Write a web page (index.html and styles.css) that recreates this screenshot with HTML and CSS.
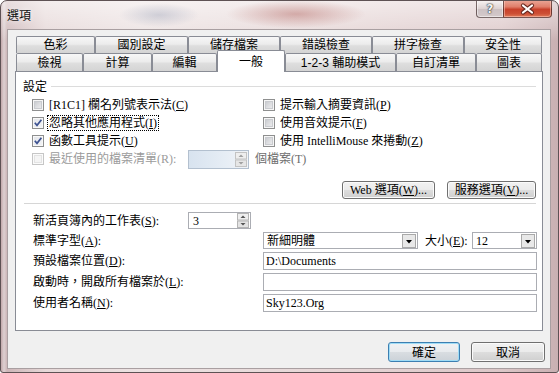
FILE: index.html
```html
<!DOCTYPE html>
<html lang="zh-Hant">
<head>
<meta charset="utf-8">
<title>選項</title>
<link rel="stylesheet" href="styles.css">
</head>
<body>
<div class="window">
  <div class="titlebar">
    <div class="title">選項</div>
    <div class="caption">
      <div class="cap-btn cap-help"><span class="qmark">?</span></div>
      <div class="cap-btn cap-close">
        <svg width="47" height="16" viewBox="0 0 47 16">
          <path d="M19 4.5 L28 11.5 M28 4.5 L19 11.5" stroke="#6a2b22" stroke-width="4.2" stroke-linecap="round" fill="none"/>
          <path d="M19 4.5 L28 11.5 M28 4.5 L19 11.5" stroke="#ffffff" stroke-width="2.2" stroke-linecap="round" fill="none"/>
        </svg>
      </div>
    </div>
  </div>
  <div class="client">
    <div class="tabstrip">
      <div class="tabrow back">
        <div class="tab w79">色彩</div>
        <div class="tab w93">國別設定</div>
        <div class="tab w92">儲存檔案</div>
        <div class="tab w92">錯誤檢查</div>
        <div class="tab w92">拼字檢查</div>
        <div class="tab w78">安全性</div>
      </div>
      <div class="tabrow front">
        <div class="tab w67">檢視</div>
        <div class="tab w69">計算</div>
        <div class="tab w65">編輯</div>
        <div class="tab active w68">一般</div>
        <div class="tab w111">1-2-3 輔助模式</div>
        <div class="tab w80">自訂清單</div>
        <div class="tab w66">圖表</div>
      </div>
    </div>
    <div class="panel">
      <div class="group-head"><span class="gh-text">設定</span><span class="gh-line"></span></div>
      <div class="opts">
        <div class="chk"><span class="box"></span><span class="lbl">[R1C1] 欄名列號表示法(<u>C</u>)</span></div>
        <div class="chk"><span class="box"></span><span class="lbl">提示輸入摘要資訊(<u>P</u>)</span></div>
        <div class="chk"><span class="box on"><svg width="10" height="10" viewBox="0 0 10 10"><path d="M1.8 4.8 L4 7.4 L8.4 1.8" stroke="#3d5291" stroke-width="1.7" fill="none"/></svg></span><span class="lbl focus">忽略其他應用程式(<u>I</u>)</span></div>
        <div class="chk"><span class="box"></span><span class="lbl">使用音效提示(<u>F</u>)</span></div>
        <div class="chk"><span class="box on"><svg width="10" height="10" viewBox="0 0 10 10"><path d="M1.8 4.8 L4 7.4 L8.4 1.8" stroke="#3d5291" stroke-width="1.7" fill="none"/></svg></span><span class="lbl">函數工具提示(<u>U</u>)</span></div>
        <div class="chk"><span class="box"></span><span class="lbl">使用 IntelliMouse 來捲動(<u>Z</u>)</span></div>
        <div class="chk wide">
          <span class="box dis"></span>
          <span class="lbl recent">最近使用的檔案清單(R):</span>
          <span class="spin disabled">
            <span class="spin-field"></span>
            <span class="spin-btns"><svg width="12" height="15" viewBox="0 0 12 15"><rect x="0.5" y="0.5" width="11" height="6.5" fill="#eeeeee" stroke="#c3c3c3"/><rect x="0.5" y="8" width="11" height="6.5" fill="#e6e6e6" stroke="#c3c3c3"/><path d="M3.5 5 L8.5 5 L6 2.5 Z" fill="#a0a0a0"/><path d="M3.5 10 L8.5 10 L6 12.5 Z" fill="#a0a0a0"/></svg></span>
          </span>
          <span class="lbl after">個檔案(T)</span>
        </div>
      </div>
      <div class="web-buttons">
        <div class="btn wb1">Web 選項(<u>W</u>)...</div>
        <div class="btn wb2">服務選項(<u>V</u>)...</div>
      </div>
      <div class="sep"></div>
      <div class="fields">
        <div class="frow r1"><span class="flabel short">新活頁簿內的工作表(<u>S</u>):</span>
          <span class="spin">
            <span class="spin-field">3</span>
            <span class="spin-btns"><svg width="12" height="15" viewBox="0 0 12 15"><rect x="0.5" y="0.5" width="11" height="6.5" fill="#efefef" stroke="#b4b4b4"/><rect x="0.5" y="8" width="11" height="6.5" fill="#e3e3e3" stroke="#b4b4b4"/><path d="M3.5 5 L8.5 5 L6 2.5 Z" fill="#555"/><path d="M3.5 10 L8.5 10 L6 12.5 Z" fill="#555"/></svg></span>
          </span>
        </div>
        <div class="frow r2"><span class="flabel">標準字型(<u>A</u>):</span>
          <span class="combo font"><span class="combo-val">新細明體</span><span class="dd"><svg width="14" height="14" viewBox="0 0 14 14"><rect x="0.5" y="0.5" width="13" height="13" fill="#e8e8e8" stroke="#a9a9a9"/><path d="M4 6 L10 6 L7 9.5 Z" fill="#000"/></svg></span></span>
          <span class="size-lbl">大小(<u>E</u>):</span>
          <span class="combo size"><span class="combo-val">12</span><span class="dd"><svg width="14" height="14" viewBox="0 0 14 14"><rect x="0.5" y="0.5" width="13" height="13" fill="#e8e8e8" stroke="#a9a9a9"/><path d="M4 6 L10 6 L7 9.5 Z" fill="#000"/></svg></span></span>
        </div>
        <div class="frow"><span class="flabel">預設檔案位置(<u>D</u>):</span><span class="edit">D:\Documents</span></div>
        <div class="frow"><span class="flabel">啟動時，開啟所有檔案於(<u>L</u>):</span><span class="edit"></span></div>
        <div class="frow"><span class="flabel">使用者名稱(<u>N</u>):</span><span class="edit">Sky123.Org</span></div>
      </div>
    </div>
    <div class="dlg-buttons">
      <div class="btn dlg default">確定</div>
      <div class="btn dlg cancel">取消</div>
    </div>
  </div>
</div>
</body>
</html>
```

FILE: styles.css
```css
* { box-sizing: border-box; }
html, body { margin: 0; padding: 0; }
body {
  width: 559px;
  height: 373px;
  overflow: hidden;
  background: #ffffff;
  font-family: "Liberation Serif", "Noto Sans CJK TC", serif;
  font-size: 12px;
  line-height: 14px;
  color: #000;
}
u { text-decoration: underline; text-underline-offset: 1px; }

.window {
  width: 559px;
  height: 373px;
  display: flex;
  flex-direction: column;
  border: 1px solid #5e5254;
  border-radius: 7px 7px 3px 3px;
  overflow: hidden;
  background:
    radial-gradient(ellipse 40px 12px at 158px 14px, rgba(140,150,175,0.35), rgba(140,150,175,0) 100%),
    radial-gradient(ellipse 70px 14px at 295px 13px, rgba(175,95,90,0.45), rgba(175,95,90,0) 100%),
    linear-gradient(to bottom, rgba(255,255,255,0.55) 0, rgba(255,255,255,0.2) 28px, rgba(255,255,255,0) 40px),
    linear-gradient(to right, #c3a9ab 0, #ddd0d1 3px, #cdb6b8 6px, #e6d8d8 8%, #ece2e2 25%, #e6d6d6 60%, #dcc7c8 90%, #c9b0b2 100%);
}

.titlebar {
  height: 28px;
  flex: none;
  display: flex;
  justify-content: space-between;
  align-items: flex-start;
  padding: 0 6px;
}
.title {
  margin-top: 7px;
  font-family: "Noto Sans CJK TC", sans-serif;
  font-size: 12px;
  line-height: 14px;
  color: #111;
  text-shadow: 0 0 5px rgba(255,255,255,0.9);
}
.caption {
  display: flex;
  margin-top: -1px;
}
.cap-btn {
  height: 18px;
  border: 1px solid rgba(70,50,50,0.7);
  border-top: none;
}
.cap-help {
  width: 27px;
  border-right: none;
  border-radius: 0 0 0 4px;
  background: linear-gradient(to bottom, rgba(255,255,255,0.6), rgba(210,200,200,0.55) 50%, rgba(175,165,168,0.55) 51%, rgba(200,190,192,0.6));
  box-shadow: inset 0 0 0 1px rgba(255,255,255,0.5);
  display: flex;
  justify-content: center;
  align-items: center;
}
.qmark {
  font-family: "DejaVu Sans", sans-serif;
  font-weight: bold;
  font-size: 12px;
  line-height: 12px;
  color: #f4f4f4;
  text-shadow: 0 0 1px #333, 0 0 1px #333, 0 0 2px #555;
}
.cap-close {
  width: 49px;
  border-radius: 0 0 4px 0;
  background: linear-gradient(to bottom, #eaa899 0, #e07e6a 40%, #c8412b 55%, #cd4f35 80%, #e07a58 100%);
  box-shadow: inset 0 0 0 1px rgba(255,210,200,0.5);
  display: flex;
  justify-content: center;
  align-items: center;
}
.cap-close svg { display: block; }

.client {
  margin: 0 7px 0 6px;
  height: 340px;
  flex: none;
  border: 1px solid #a99fa1;
  background: #f0f0f0;
  padding: 6px 7px 0 7px;
  display: flex;
  flex-direction: column;
}

.tabstrip { display: flex; flex-direction: column; padding-left: 1px; }
.tabrow { display: flex; }
.tabrow.back { height: 17px; }
.tabrow.front { height: 18px; }
.tab {
  height: 100%;
  flex: none;
  border: 1px solid #898c95;
  border-bottom: none;
  border-radius: 2px 2px 0 0;
  background: linear-gradient(to bottom, #f7f7f7 0, #ececec 45%, #dedede 55%, #d4d4d4 100%);
  display: flex;
  align-items: center;
  justify-content: center;
  font-family: "Liberation Sans", "Noto Sans CJK TC", sans-serif;
  font-size: 12px;
  line-height: 14px;
  color: #000;
}
.tab.active {
  height: 22px;
  margin-top: -3px;
  background: #ffffff;
  position: relative;
  z-index: 2;
}
.w65 { width: 65px; } .w66 { width: 66px; } .w67 { width: 67px; } .w68 { width: 68px; }
.w69 { width: 69px; } .w78 { width: 78px; } .w79 { width: 79px; } .w80 { width: 80px; }
.w92 { width: 92px; } .w93 { width: 93px; } .w111 { width: 111px; }

.panel {
  position: relative;
  z-index: 1;
  width: 528px;
  height: 260px;
  flex: none;
  border: 1px solid #898c95;
  background: #ffffff;
}

.group-head {
  margin-top: 7px;
  height: 14px;
  padding: 0 6px 0 7px;
  display: flex;
  align-items: center;
}
.gh-text { font-family: "Noto Sans CJK TC", sans-serif; }
.gh-line { flex: 1; height: 1px; background: #dcdcdc; margin-left: 4px; }

.opts {
  margin-top: 3px;
  padding-left: 16px;
  display: grid;
  grid-template-columns: 231px 1fr;
  grid-auto-rows: 18px;
}
.chk { display: flex; align-items: center; white-space: nowrap; }
.chk.wide { grid-column: 1 / span 2; }
.box {
  width: 12px;
  height: 12px;
  flex: none;
  margin-right: 5px;
  border: 1px solid #8e8f8f;
  background: linear-gradient(135deg, #bfc2c6 0, #dcdde0 50%, #f2f2f3 100%);
  box-shadow: inset 0 0 0 1px #f6f6f6, inset 0 0 0 2px #c9cbcf;
  display: flex;
  align-items: center;
  justify-content: center;
}
.box.on { background: linear-gradient(135deg, #e3e5ea 0, #f3f4f6 100%); box-shadow: inset 0 0 0 1px #f8f8f8; }
.box svg { display: block; }
.box.dis {
  border-color: #c6c6c6;
  background: #f4f4f4;
  box-shadow: inset 0 0 0 1px #fbfbfb, inset 0 0 0 2px #e3e3e3;
}
.lbl { line-height: 14px; }
.lbl.focus { outline: 1px dotted #000; outline-offset: 0; padding: 0 1px; margin-left: -1px; }
.lbl.recent { width: 139px; flex: none; color: #9b9b9b; }
.lbl.after { margin-left: 6px; color: #6d6d6d; }

.spin {
  display: flex;
  width: 63px;
  height: 17px;
  flex: none;
  border: 1px solid #abadb3;
  background: #ffffff;
  padding: 0 1px 0 0;
  align-items: center;
}
.spin.disabled {
  width: 61px;
  height: 19px;
  border-color: #b3c0cf;
  background: linear-gradient(to right, #d8e3ef 0, #e6edf5 60%, #f1f4f8 100%);
}
.spin-field { flex: 1; padding-left: 4px; line-height: 14px; }
.spin-btns { width: 12px; height: 15px; flex: none; }
.spin-btns svg { display: block; }

.web-buttons {
  margin-top: 13px;
  height: 18px;
  display: flex;
  justify-content: flex-end;
  gap: 12px;
  padding-right: 6px;
}
.btn {
  height: 100%;
  border: 1px solid #707070;
  border-radius: 3px;
  background: linear-gradient(to bottom, #f2f2f2 0, #ebebeb 48%, #dddddd 52%, #cfcfcf 100%);
  box-shadow: inset 0 0 0 1px #fbfbfb;
  display: flex;
  align-items: center;
  justify-content: center;
  white-space: nowrap;
  line-height: 14px;
}
.wb1 { width: 93px; }
.wb2 { width: 89px; }

.sep { margin: 4px 6px 0 8px; height: 1px; background: #d6d6d6; }

.fields {
  margin-top: 8px;
  padding: 0 5px 0 17px;
  display: flex;
  flex-direction: column;
  gap: 3px;
}
.frow { height: 18px; display: flex; align-items: center; white-space: nowrap; }
.frow.r1, .frow.r2 { height: 17px; }
.flabel { width: 230px; flex: none; }
.flabel.short { width: 155px; }

.combo {
  height: 100%;
  display: flex;
  align-items: center;
  border: 1px solid #abadb3;
  background: #fff;
  padding-right: 1px;
}
.combo.font { width: 155px; }
.combo.size { width: 65px; }
.combo-val { flex: 1; padding-left: 3px; }
.dd { width: 14px; height: 14px; flex: none; }
.dd svg { display: block; }
.size-lbl { width: 47px; margin-left: 7px; flex: none; }

.edit {
  flex: 1;
  height: 100%;
  border: 1px solid #abadb3;
  background: #fff;
  padding-left: 2px;
  display: flex;
  align-items: center;
}

.dlg-buttons {
  margin-top: 11px;
  margin-right: -2px;
  display: flex;
  justify-content: flex-end;
  gap: 11px;
  height: 20px;
}
.btn.dlg { width: 72px; font-family: "Noto Sans CJK TC", sans-serif; }
.btn.cancel { width: 74px; }
.btn.default {
  border-color: #3c7fb1;
  box-shadow: inset 0 0 0 1px #9fdcf6;
  background: linear-gradient(to bottom, #f0f2f4 0, #e8ebee 48%, #d9dde1 52%, #ccd2d8 100%);
}
```
